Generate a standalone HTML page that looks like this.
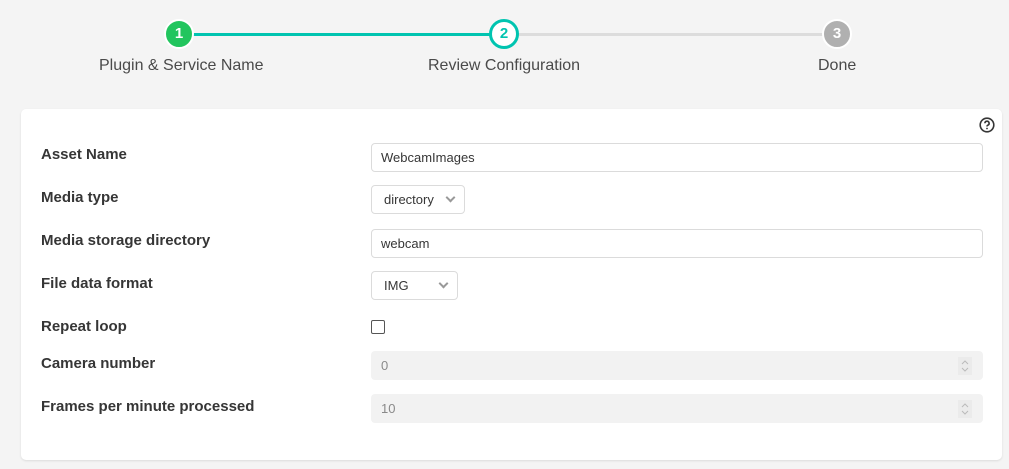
<!DOCTYPE html>
<html><head><style>
*{box-sizing:border-box;margin:0;padding:0}
body{width:1009px;height:469px;background:#f4f4f4;font-family:"Liberation Sans",sans-serif;position:relative;overflow:hidden;color:#363636}
.a{position:absolute}
.line{position:absolute;height:3px;top:33px}
.c{position:absolute;width:30px;height:30px;border-radius:50%;top:19px;color:#fff;font-weight:bold;font-size:15px;text-align:center;line-height:26px;border:2px solid #fff}
.sl{position:absolute;top:57px;font-size:16px;color:#4a4a4a;white-space:nowrap}
.card{position:absolute;left:21px;top:109px;width:981px;height:351px;background:#fff;border-radius:5px;box-shadow:0 1px 2px rgba(0,0,0,.1)}
.lb{position:absolute;left:41px;font-weight:bold;font-size:15px;color:#363636}
.in{position:absolute;left:371px;width:612px;height:29px;border:1px solid #dbdbdb;border-radius:4px;font-size:13px;padding-left:9px;line-height:27px;color:#363636;background:#fff}
.dis{background:#f2f2f2;border-color:#f2f2f2;color:#8a8a8a}
.sel{position:absolute;left:371px;height:29px;border:1px solid #dbdbdb;border-radius:4px;font-size:13px;padding-left:12px;line-height:27px;background:#fff}
.chev{position:absolute;top:8px;width:7px;height:7px;border-right:2px solid #999;border-bottom:2px solid #999;transform:rotate(45deg)}
.spin{position:absolute;right:10px;top:5px;width:14px;height:18px;background:#ebebeb}
</style></head><body>
<div class="line" style="left:190px;width:310px;background:#00c4b0"></div>
<div class="line" style="left:515px;width:310px;background:#dcdcdc"></div>
<div class="c" style="left:164px;background:#22c55e">1</div>
<div class="c" style="left:489px;background:#fff;border:3px solid #00c4b0;color:#00c4b0;line-height:24px">2</div>
<div class="c" style="left:822px;background:#b0b0b0">3</div>
<div class="sl" style="left:99px">Plugin &amp; Service Name</div>
<div class="sl" style="left:428px">Review Configuration</div>
<div class="sl" style="left:818px">Done</div>
<div class="card"></div>
<svg class="a" style="left:979px;top:117px" width="16" height="16" viewBox="0 0 16 16"><circle cx="8" cy="8" r="6.8" fill="none" stroke="#363636" stroke-width="1.6"/><path d="M5.9 6.3a2.1 2.1 0 1 1 2.8 2c-.5.2-.7.6-.7 1.2" fill="none" stroke="#363636" stroke-width="1.6"/><circle cx="8" cy="11.5" r="0.9" fill="#363636"/></svg>
<div class="lb" style="top:146px">Asset Name</div>
<div class="lb" style="top:189px">Media type</div>
<div class="lb" style="top:232px">Media storage directory</div>
<div class="lb" style="top:275px">File data format</div>
<div class="lb" style="top:318px">Repeat loop</div>
<div class="lb" style="top:355px">Camera number</div>
<div class="lb" style="top:398px">Frames per minute processed</div>
<div class="in" style="top:143px">WebcamImages</div>
<div class="sel" style="top:185px;width:94px">directory<div class="chev" style="left:75px"></div></div>
<div class="in" style="top:229px">webcam</div>
<div class="sel" style="top:271px;width:87px">IMG<div class="chev" style="left:68px"></div></div>
<div class="a" style="left:371px;top:320px;width:14px;height:14px;border:1.5px solid #555;border-radius:2px"></div>
<div class="in dis" style="top:351px">0<svg class="spin" viewBox="0 0 14 18"><path d="M4 7l3-3 3 3M4 11l3 3 3-3" fill="none" stroke="#bbb" stroke-width="1"/></svg></div>
<div class="in dis" style="top:394px">10<svg class="spin" viewBox="0 0 14 18"><path d="M4 7l3-3 3 3M4 11l3 3 3-3" fill="none" stroke="#bbb" stroke-width="1"/></svg></div>
</body></html>
